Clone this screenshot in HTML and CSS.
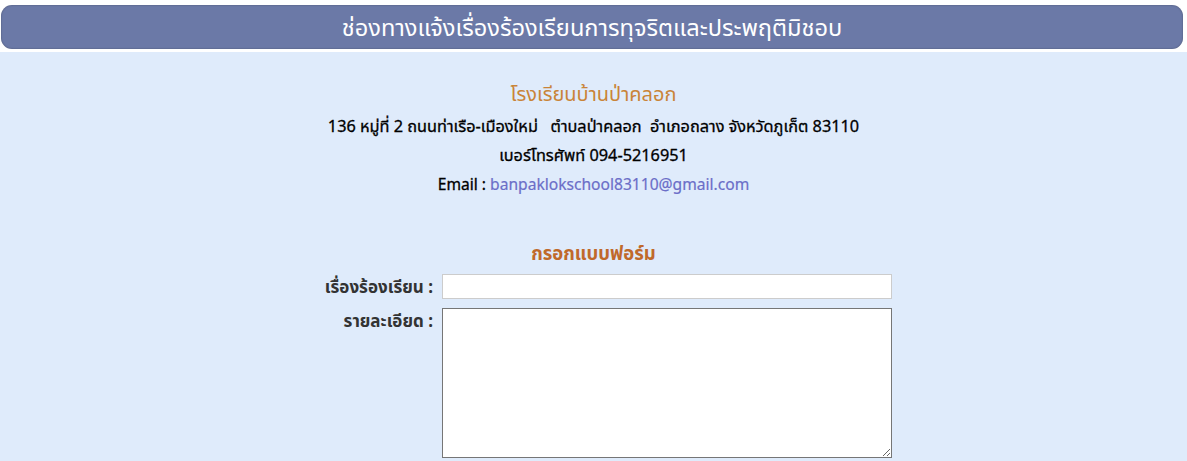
FILE: index.html
```html
<!DOCTYPE html>
<html lang="th">

<head>
    <meta charset="UTF-8">
    <meta name="viewport" content="width=device-width, initial-scale=1.0">
    <title>ช่องทางแจ้งเรื่องร้องเรียน</title>
    <link rel="stylesheet" href="styles.css">
</head>

<body>
    <div class="top">
        <div class="title-bar">ช่องทางแจ้งเรื่องร้องเรียนการทุจริตและประพฤติมิชอบ</div>
    </div>

    <div class="school">
        <div class="school-name">โรงเรียนบ้านป่าคลอก</div>
        <div class="line">136 หมู่ที่ 2 ถนนท่าเรือ-เมืองใหม่ &nbsp; ตำบลป่าคลอก &nbsp;อำเภอถลาง จังหวัดภูเก็ต 83110</div>
        <div class="line">เบอร์โทรศัพท์ 094-5216951</div>
        <div class="line email">Email : <span class="mail">banpaklokschool83110@gmail.com</span></div>
    </div>

    <form class="complaint">
        <div class="form-title">กรอกแบบฟอร์ม</div>
        <div class="form-grid">
            <label for="subject">เรื่องร้องเรียน :</label>
            <input type="text" id="subject" name="subject">
            <label for="detail">รายละเอียด :</label>
            <textarea id="detail" name="detail"></textarea>
        </div>
    </form>
</body>

</html>
```

FILE: styles.css
```css
body {
    margin: 0;
    background-color: #dfebfb;
    font-family: "Noto Sans", "Noto Sans Thai", sans-serif;
    color: #000;
}

.top {
    background-color: #fff;
    padding: 5px 4px 3px 1px;
}

.title-bar {
    height: 44px;
    line-height: 44px;
    border-radius: 11px;
    background-color: #6b79a7;
    box-shadow: inset 0 0 2px rgba(0, 0, 0, 0.35);
    color: #fff;
    font-size: 23.6px;
    text-align: center;
}

.school {
    margin-top: 27px;
    text-align: center;
}

.school-name {
    color: #c98438;
    font-size: 20px;
    line-height: 30px;
    margin-bottom: 3px;
}

.line {
    font-size: 16.3px;
    line-height: 29px;
    -webkit-text-stroke: 0.3px #000;
}

.line.email {
    font-size: 15.6px;
}

.mail {
    color: #6b6ec8;
    -webkit-text-stroke: 0.2px #6b6ec8;
}

.complaint {
    margin-top: 42px;
}

.form-title {
    text-align: center;
    color: #c0692b;
    font-size: 18.5px;
    font-weight: bold;
    line-height: 24px;
    margin-bottom: 9px;
}

.form-grid {
    display: grid;
    grid-template-columns: 138px 450px;
    column-gap: 9px;
    row-gap: 9px;
    justify-content: center;
}

.form-grid label {
    text-align: right;
    font-weight: bold;
    font-size: 17px;
    color: #333;
    line-height: 25px;
}

.form-grid input {
    height: 25px;
    box-sizing: border-box;
    border: 1px solid #ccc;
    margin: 0;
}

.form-grid textarea {
    height: 150px;
    box-sizing: border-box;
    border: 1px solid #767676;
    margin: 0;
}
```
